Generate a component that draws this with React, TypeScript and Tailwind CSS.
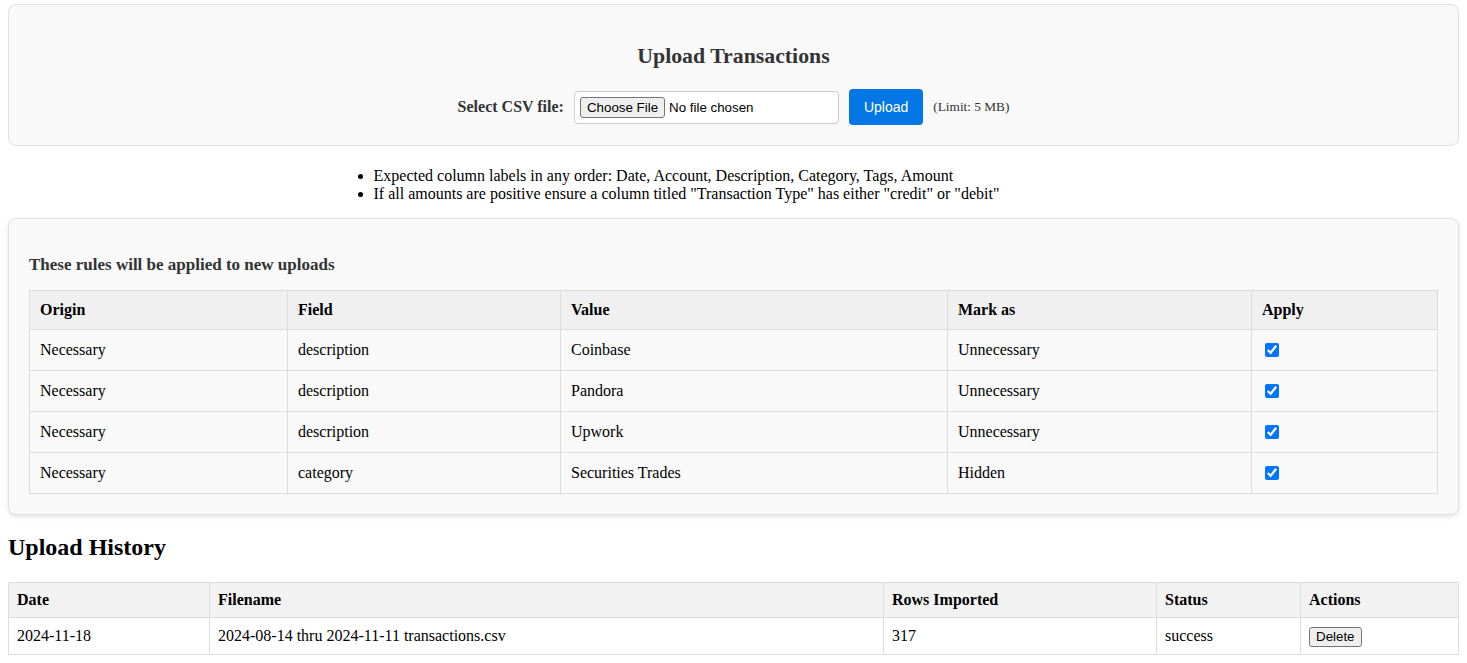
import React from "react";

const rules = [
  { origin: "Necessary", field: "description", value: "Coinbase", mark: "Unnecessary" },
  { origin: "Necessary", field: "description", value: "Pandora", mark: "Unnecessary" },
  { origin: "Necessary", field: "description", value: "Upwork", mark: "Unnecessary" },
  { origin: "Necessary", field: "category", value: "Securities Trades", mark: "Hidden" },
];

const history = [
  {
    date: "2024-11-18",
    filename: "2024-08-14 thru 2024-11-11 transactions.csv",
    rows: 317,
    status: "success",
  },
];

const ruleTh = "border border-[#ddd] bg-[#f0f0f0] px-[10px] py-[10px] text-left font-bold leading-[18px]";
const ruleTd = "border border-[#ddd] px-[10px] py-[10px] leading-[20px]";
const histTh = "border border-[#ddd] bg-[#f2f2f2] px-2 py-2 text-left font-bold leading-[18px]";
const histTd = "border border-[#ddd] px-2 py-2 leading-[20px]";

function UploadCard() {
  return (
    <div className="rounded-lg border border-[#e0e0e0] bg-[#f9f9f9] px-5 pt-[39px] pb-[20px] text-center">
      <h2 className="text-[21.8px] font-bold leading-[25px] text-[#333]">Upload Transactions</h2>
      <div className="mt-[20px] flex h-[36px] items-center justify-center gap-[10px]">
        <label className="text-[16px] font-bold text-[#333]">Select CSV file:</label>
        <input
          type="file"
          accept=".csv"
          className="w-[265px] rounded border border-[#ccc] bg-white p-[5px] font-['Liberation_Sans',Arial,sans-serif] text-[13.33px] leading-[17px] text-black file:mr-[4px] file:rounded-[3px] file:border file:border-[#767676] file:bg-[#efefef] file:px-[6px] file:py-px"
        />
        <button className="rounded bg-[#0377e6] px-[15px] py-[10px] font-['Liberation_Sans',Arial,sans-serif] text-[14px] leading-[16px] text-white">
          Upload
        </button>
        <span className="text-[13.3px] text-[#333]">(Limit: 5 MB)</span>
      </div>
    </div>
  );
}

function RulesCard() {
  return (
    <div className="rounded-lg border border-[#e0e0e0] bg-[#f9f9f9] px-5 pt-[36px] pb-5 shadow-[0_2px_5px_rgba(0,0,0,0.1)]">
      <h3 className="text-[17px] font-bold leading-[20px] text-[#333]">These rules will be applied to new uploads</h3>
      <table className="mt-[15px] w-full table-fixed border-collapse text-[16px] text-black">
        <thead>
          <tr>
            <th className={`${ruleTh} w-[258px]`}>Origin</th>
            <th className={`${ruleTh} w-[273px]`}>Field</th>
            <th className={`${ruleTh} w-[387px]`}>Value</th>
            <th className={`${ruleTh} w-[304px]`}>Mark as</th>
            <th className={ruleTh}>Apply</th>
          </tr>
        </thead>
        <tbody>
          {rules.map((r, i) => (
            <tr key={i}>
              <td className={ruleTd}>{r.origin}</td>
              <td className={ruleTd}>{r.field}</td>
              <td className={ruleTd}>{r.value}</td>
              <td className={ruleTd}>{r.mark}</td>
              <td className={ruleTd}>
                <input
                  type="checkbox"
                  defaultChecked
                  className="my-[3px] ml-[3px] block h-[14px] w-[14px] accent-[#0075ff]"
                />
              </td>
            </tr>
          ))}
        </tbody>
      </table>
    </div>
  );
}

function HistorySection() {
  return (
    <div>
      <h2 className="mt-[18px] text-[24px] font-bold leading-[28px] text-black">Upload History</h2>
      <table className="mt-[21px] w-full table-fixed border-collapse text-[16px] text-black">
        <thead>
          <tr>
            <th className={`${histTh} w-[201px]`}>Date</th>
            <th className={`${histTh} w-[674px]`}>Filename</th>
            <th className={`${histTh} w-[273px]`}>Rows Imported</th>
            <th className={`${histTh} w-[144px]`}>Status</th>
            <th className={histTh}>Actions</th>
          </tr>
        </thead>
        <tbody>
          {history.map((h, i) => (
            <tr key={i}>
              <td className={histTd}>{h.date}</td>
              <td className={histTd}>{h.filename}</td>
              <td className={histTd}>{h.rows}</td>
              <td className={histTd}>{h.status}</td>
              <td className={`${histTd} py-[7px]`}>
                <button className="rounded-[3px] border border-[#767676] bg-[#efefef] px-[6px] py-px font-['Liberation_Sans',Arial,sans-serif] text-[13.33px] leading-[16px] text-black">
                  Delete
                </button>
              </td>
            </tr>
          ))}
        </tbody>
      </table>
    </div>
  );
}

export default function App() {
  return (
    <div className="min-h-screen bg-white px-2 pt-1 pb-4 font-['Liberation_Serif','Times_New_Roman',serif] text-black">
      <UploadCard />
      <ul className="mx-auto mt-[21px] mb-[15px] max-w-[800px] list-disc pl-10 text-[16px] leading-[18px]">
        <li>Expected column labels in any order: Date, Account, Description, Category, Tags, Amount</li>
        <li>If all amounts are positive ensure a column titled "Transaction Type" has either "credit" or "debit"</li>
      </ul>
      <RulesCard />
      <HistorySection />
    </div>
  );
}
